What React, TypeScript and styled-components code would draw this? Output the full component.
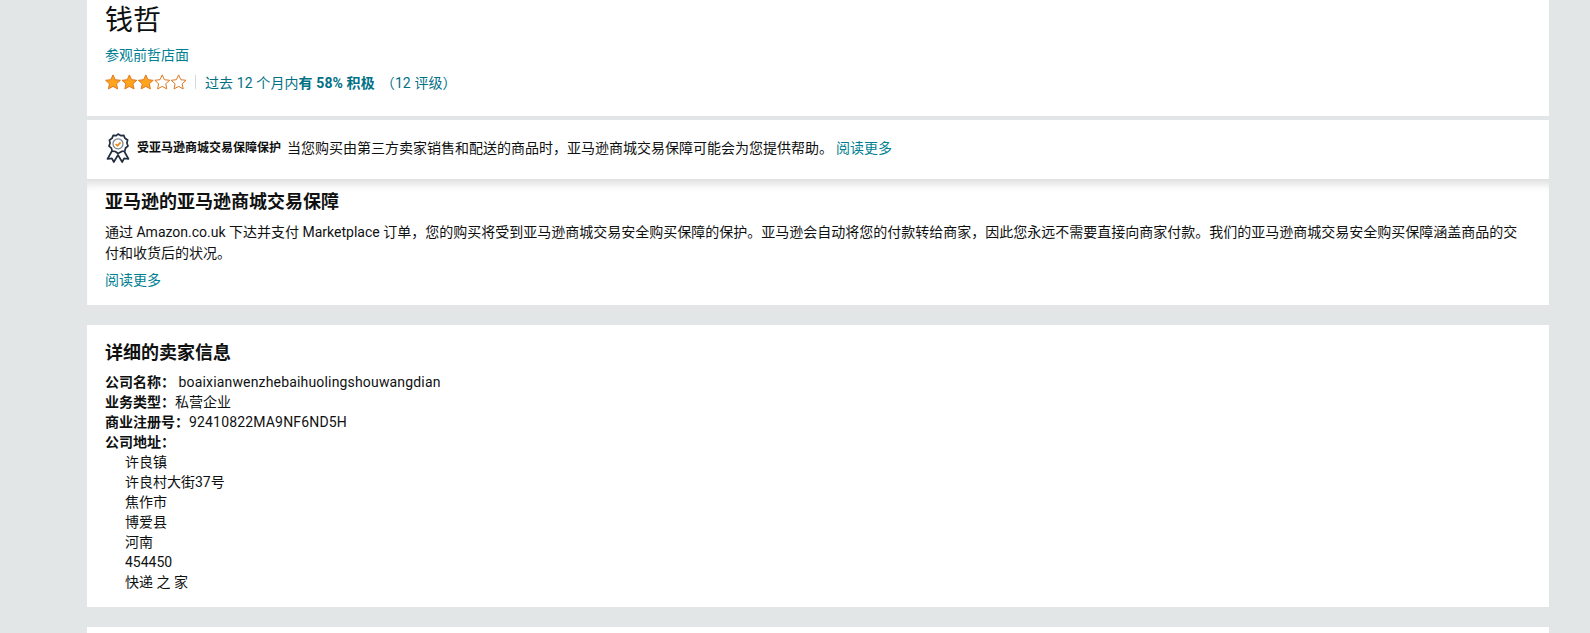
import React from "react";
import styled, { createGlobalStyle } from "styled-components";

const Global = createGlobalStyle`
  html, body { margin: 0; padding: 0; height: 633px; overflow: hidden; background: #e3e6e6; }
  body { font-family: Roboto, "Noto Sans CJK SC", sans-serif; color: #0f1111; font-size: 14px; }
`;
const Page = styled.div`
  display: flex; flex-direction: column; height: 633px; overflow: hidden;
  padding: 0 41px 0 87px; box-sizing: border-box;
`;
const Card = styled.section<{ $h: number; $mb?: number }>`
  flex: none; height: ${(p) => p.$h}px; margin-bottom: ${(p) => p.$mb ?? 0}px;
  background: #fff; box-sizing: border-box; padding: 0 18px; position: relative;
`;
const Title = styled.h1`
  margin: 0; font-size: 28px; line-height: 36px; font-weight: 400; padding-top: 3px;
`;
const TealLink = styled.a`
  color: #007f93; font-size: 14px; line-height: 20px; display: block;
`;
const StoreLink = styled(TealLink)`margin-top: 6px;`;
const RatingRow = styled.div`
  display: flex; align-items: center; margin-top: 7px; height: 20px; color: #007185; font-size: 14px;
  letter-spacing: 0.1px;
`;
const Divider = styled.span`
  width: 1px; height: 14px; background: #d5d9d9; margin: 0 9px;
`;
const Stars = styled.svg`display: block;`;
const Strong = styled.strong`font-weight: 700;`;
const Count = styled.span`margin-left: 6px;`;
const BannerCard = styled(Card)`
  display: flex; align-items: center; padding: 0 18px 3px;
`;
const Banner = styled.div`display: flex; align-items: center; font-size: 14px; line-height: 20px;`;
const BannerBold = styled.strong`font-size: 12px; font-weight: 700; margin: 0 6px 0 6px;`;
const BannerLink = styled.a`color: #007f93; margin-left: 3px;`;
const Heading = styled.h2`
  margin: 0; font-size: 18px; line-height: 24px; font-weight: 700;
`;
const GuaranteeCard = styled(Card)`
  padding-top: 11px;
  box-shadow: inset 0 11px 9px -6px rgba(15, 17, 17, 0.14);
`;
const Para = styled.p`margin: 8px 0 0; font-size: 14px; line-height: 21px;`;
const ReadMore = styled(TealLink)`margin-top: 6px;`;
const DetailCard = styled(Card)`padding-top: 16px;`;
const Rows = styled.div`margin-top: 7px; font-size: 14px; line-height: 20px;`;
const Row = styled.div``;
const Latin = styled.span`letter-spacing: 0.17px;`;
const Label = styled.span`font-weight: 700;`;
const Addr = styled.div`padding-left: 20px;`;

const Star = ({ x, filled }: { x: number; filled: boolean }) => (
  <path
    transform={`translate(${x} 0)`}
    d="M8 .9l2.2 4.8 5.2.6-3.9 3.5 1.1 5.1L8 12.4l-4.6 2.5 1.1-5.1L.6 6.3l5.2-.6z"
    fill={filled ? "#ffa41c" : "#fff"}
    stroke="#de7921"
    strokeWidth="1"
    strokeLinejoin="round"
  />
);

export default function App() {
  return (
    <Page>
      <Global />
      <Card $h={116} $mb={4}>
        <Title>钱哲</Title>
        <StoreLink>参观前哲店面</StoreLink>
        <RatingRow>
          <Stars width="81" height="16" viewBox="0 0 81 16">
            {[0, 16.4, 32.8, 49.2, 65.6].map((x, i) => <Star key={x} x={x} filled={i < 3} />)}
          </Stars>
          <Divider />
          <span>过去 12 个月内<Strong>有 58% 积极</Strong></span>
          <Count>（12 评级）</Count>
        </RatingRow>
      </Card>
      <BannerCard $h={59}>
        <Banner>
          <svg width="26" height="30" viewBox="0 0 26 30" fill="none">
            <path d="M7.5 17L2.5 26l4.4-.6L8.8 29l4.2-7 4.2 7 1.9-3.6 4.4.6L18.5 17" stroke="#232f3e" strokeWidth="1.7" strokeLinejoin="round" />
            <path d="M13 1l2.7 1.6 3.1-.2 1.2 2.9 2.6 1.7-.7 3 1.1 3-2.4 2-.8 3-3.1.4L13 20.5l-2.7-2-3.1-.4-.8-3-2.4-2 1.1-3-.7-3L7 5.3l1.2-2.9 3.1.2z" fill="#fff" stroke="#232f3e" strokeWidth="1.7" strokeLinejoin="round" />
            <circle cx="13" cy="10.8" r="5" stroke="#7a8490" strokeWidth="1.3" />
            <path d="M10.6 11l1.8 1.7 3.2-3.4" stroke="#f08a1d" strokeWidth="1.7" />
          </svg>
          <BannerBold>受亚马逊商城交易保障保护</BannerBold>
          <span>当您购买由第三方卖家销售和配送的商品时，亚马逊商城交易保障可能会为您提供帮助。</span>
          <BannerLink>阅读更多</BannerLink>
        </Banner>
      </BannerCard>
      <GuaranteeCard $h={126} $mb={20}>
        <Heading>亚马逊的亚马逊商城交易保障</Heading>
        <Para>通过 Amazon.co.uk 下达并支付 Marketplace 订单，您的购买将受到亚马逊商城交易安全购买保障的保护。亚马逊会自动将您的付款转给商家，因此您永远不需要直接向商家付款。我们的亚马逊商城交易安全购买保障涵盖商品的交付和收货后的状况。</Para>
        <ReadMore>阅读更多</ReadMore>
      </GuaranteeCard>
      <DetailCard $h={282} $mb={20}>
        <Heading>详细的卖家信息</Heading>
        <Rows>
          <Row><Label>公司名称：</Label>&nbsp;<Latin>boaixianwenzhebaihuolingshouwangdian</Latin></Row>
          <Row><Label>业务类型：</Label>私营企业</Row>
          <Row><Label>商业注册号：</Label><Latin>92410822MA9NF6ND5H</Latin></Row>
          <Row><Label>公司地址：</Label></Row>
          <Addr>许良镇</Addr>
          <Addr>许良村大街37号</Addr>
          <Addr>焦作市</Addr>
          <Addr>博爱县</Addr>
          <Addr>河南</Addr>
          <Addr>454450</Addr>
          <Addr>快递 之 家</Addr>
        </Rows>
      </DetailCard>
      <Card $h={40} />
    </Page>
  );
}
